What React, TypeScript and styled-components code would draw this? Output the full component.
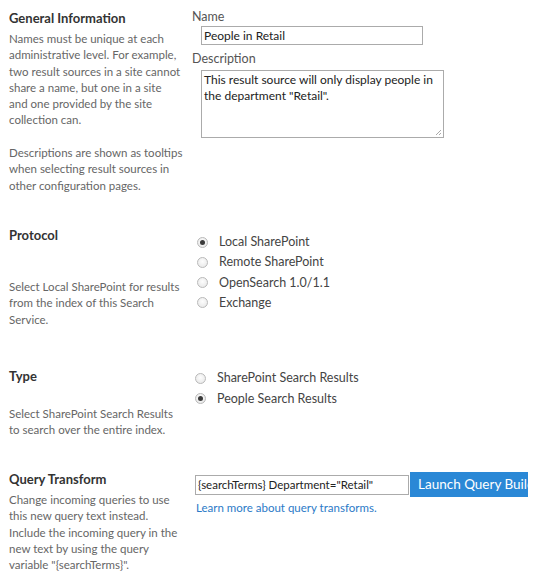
import React from "react";
import styled, { createGlobalStyle } from "styled-components";

const Global = createGlobalStyle`
  html, body { margin: 0; padding: 0; background: #fff; }
  body { font-family: Lato, "Segoe UI", "Open Sans", sans-serif; }
`;

const Page = styled.div`
  width: 543px;
  height: 574px;
  overflow: hidden;
  padding: 9px 0 0 9px;
  box-sizing: border-box;
`;

const Section = styled.section<{ $h?: number }>`
  display: grid;
  grid-template-columns: 183px 1fr;
  height: ${(p) => (p.$h ? `${p.$h}px` : "auto")};
`;

const Left = styled.div`
  display: flex;
  flex-direction: column;
`;

const Heading = styled.h3<{ $mt?: number }>`
  margin: ${(p) => p.$mt ?? 0}px 0 0;
  font-size: 13px;
  font-weight: 700;
  color: #333;
  line-height: 18px;
`;

const Desc = styled.p<{ $mt?: number }>`
  margin: ${(p) => p.$mt ?? 4}px 0 0;
  font-size: 11.5px;
  line-height: 16.3px;
  color: #666;
`;

const Right = styled.div<{ $pl?: number }>`
  display: flex;
  flex-direction: column;
  padding-left: ${(p) => p.$pl ?? 0}px;
`;

const Label = styled.div<{ $mt?: number }>`
  font-size: 12.5px;
  color: #555;
  line-height: 16px;
  margin-top: ${(p) => p.$mt ?? 0}px;
`;

const TextInput = styled.div<{ $w: number; $h: number; $ml?: number; $mt?: number; $fs?: number }>`
  width: ${(p) => p.$w}px;
  height: ${(p) => p.$h}px;
  margin-left: ${(p) => p.$ml ?? 9}px;
  margin-top: ${(p) => p.$mt ?? 0}px;
  border: 1px solid #ababab;
  box-sizing: border-box;
  font-size: ${(p) => p.$fs ?? 12}px;
  color: #222;
  padding: 1px 2px;
  line-height: 16px;
  position: relative;
  background: #fff;
  white-space: nowrap;
`;

const Grip = styled.svg`
  position: absolute;
  right: 1px;
  bottom: 1px;
`;

const RadioList = styled.div<{ $mt: number; $gap: number }>`
  display: flex;
  flex-direction: column;
  gap: ${(p) => p.$gap}px;
  margin-top: ${(p) => p.$mt}px;
`;

const RadioRow = styled.div`
  display: flex;
  align-items: center;
  gap: 11px;
  height: 16px;
  font-size: 12.5px;
  color: #444;
  line-height: 16px;
`;

const Circle = styled.span<{ $on?: boolean }>`
  width: 11px;
  height: 11px;
  border-radius: 50%;
  border: 1px solid #b9b9b9;
  background: radial-gradient(circle at 50% 40%, #fdfdfd 0%, #e4e4e4 100%);
  box-sizing: border-box;
  display: flex;
  align-items: center;
  justify-content: center;
  &::after {
    content: "";
    width: 5px;
    height: 5px;
    border-radius: 50%;
    background: ${(p) => (p.$on ? "#3a3a3a" : "transparent")};
  }
`;

const QueryRow = styled.div`
  display: flex;
  align-items: center;
  margin-top: 3px;
`;

const Button = styled.div`
  width: 118px;
  height: 25px;
  background: #2a88d6;
  color: #fff;
  font-size: 13.5px;
  line-height: 25px;
  padding-left: 8px;
  box-sizing: border-box;
  white-space: nowrap;
  overflow: hidden;
  margin-left: 1px;
`;

const Link = styled.a`
  font-size: 11.5px;
  color: #2b7ac7;
  margin-top: 3px;
  margin-left: 1px;
  text-decoration: none;
  line-height: 16px;
`;

function Radio({ on, label }: { on?: boolean; label: string }) {
  return (
    <RadioRow>
      <Circle $on={on} />
      {label}
    </RadioRow>
  );
}

export default function App() {
  return (
    <Page>
      <Global />
      <Section $h={205}>
        <Left>
          <Heading>General Information</Heading>
          <Desc>
            Names must be unique at each
            <br />
            administrative level. For example,
            <br />
            two result sources in a site cannot
            <br />
            share a name, but one in a site
            <br />
            and one provided by the site
            <br />
            collection can.
            <br />
            <br />
            Descriptions are shown as tooltips
            <br />
            when selecting result sources in
            <br />
            other configuration pages.
          </Desc>
        </Left>
        <Right>
          <Label>Name</Label>
          <TextInput $w={222} $h={19} $mt={1}>People in Retail</TextInput>
          <Label $mt={6}>Description</Label>
          <TextInput $w={243} $h={68} $mt={3}>
            This result source will only display people in
            <br />
            the department "Retail".
            <Grip width="7" height="7" viewBox="0 0 7 7">
              <path d="M6 1 L1 6 M6 4 L4 6" stroke="#aaa" strokeWidth="1" />
            </Grip>
          </TextInput>
        </Right>
      </Section>
      <Section $h={142}>
        <Left>
          <Heading $mt={12}>Protocol</Heading>
          <Desc $mt={35}>
            Select Local SharePoint for results
            <br />
            from the index of this Search
            <br />
            Service.
          </Desc>
        </Left>
        <Right $pl={5}>
          <RadioList $mt={20} $gap={4.3}>
            <Radio on label="Local SharePoint" />
            <Radio label="Remote SharePoint" />
            <Radio label="OpenSearch 1.0/1.1" />
            <Radio label="Exchange" />
          </RadioList>
        </Right>
      </Section>
      <Section $h={113}>
        <Left>
          <Heading $mt={11}>Type</Heading>
          <Desc $mt={21}>
            Select SharePoint Search Results
            <br />
            to search over the entire index.
          </Desc>
        </Left>
        <Right $pl={3}>
          <RadioList $mt={14} $gap={4.5}>
            <Radio label="SharePoint Search Results" />
            <Radio on label="People Search Results" />
          </RadioList>
        </Right>
      </Section>
      <Section>
        <Left>
          <Heading $mt={1}>Query Transform</Heading>
          <Desc $mt={4}>
            Change incoming queries to use
            <br />
            this new query text instead.
            <br />
            Include the incoming query in the
            <br />
            new text by using the query
            <br />
            variable "{"{searchTerms}"}".
          </Desc>
        </Left>
        <Right $pl={3}>
          <QueryRow>
            <TextInput $w={214} $h={20} $ml={0} $fs={11.5}>
              {'{searchTerms} Department="Retail"'}
            </TextInput>
            <Button>Launch Query Builder</Button>
          </QueryRow>
          <Link>Learn more about query transforms.</Link>
        </Right>
      </Section>
    </Page>
  );
}
